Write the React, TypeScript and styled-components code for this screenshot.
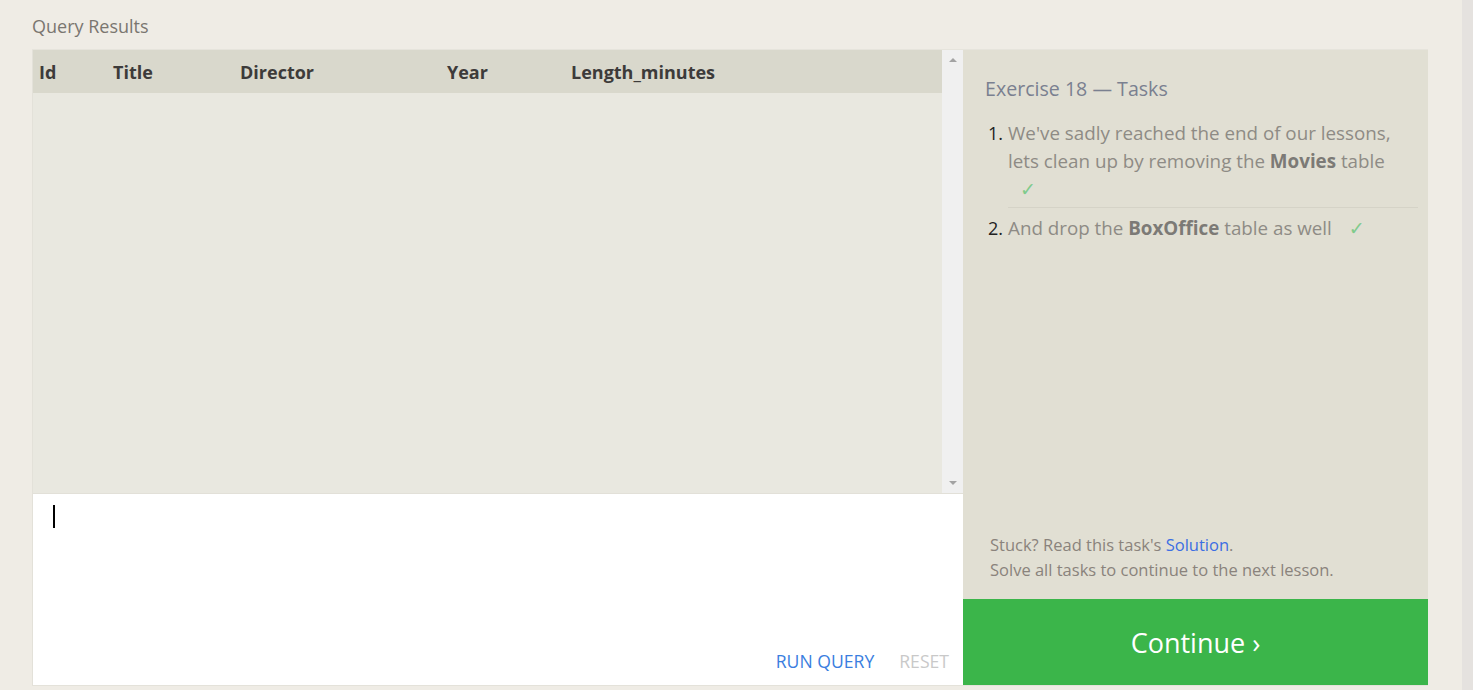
import React from 'react';
import styled, { createGlobalStyle } from 'styled-components';

const GlobalStyle = createGlobalStyle`
  body {
    margin: 0;
    background: #efece5;
    font-family: "Open Sans", "Liberation Sans", sans-serif;
  }
`;

const Page = styled.div`
  display: flex;
  height: 690px;
  overflow: hidden;
`;

const Main = styled.div`
  flex: 1;
  padding: 0 34px 0 32px;
`;

const PageScroll = styled.div`
  width: 11px;
  background: #e5e2df;
`;

const Heading = styled.div`
  height: 49px;
  padding-top: 13px;
  box-sizing: border-box;
  font-size: 18px;
  line-height: 26px;
  color: #7a7670;
`;

const Panel = styled.div`
  display: grid;
  grid-template-columns: 931px 465px;
  height: 637px;
  border-top: 1px solid #e6e4dc;
  border-bottom: 1px solid #e4e2da;
  box-sizing: border-box;
`;

const LeftColumn = styled.div`
  display: flex;
  flex-direction: column;
  border-left: 1px solid #e3e1d9;
`;

const Results = styled.div`
  display: flex;
  height: 443px;
  background: #e9e8e0;
`;

const TableArea = styled.div`
  flex: 1;
`;

const Table = styled.table`
  width: 100%;
  border-collapse: collapse;
  table-layout: fixed;
`;

const HeadCell = styled.th<{ $w?: number }>`
  box-sizing: border-box;
  width: ${(p) => (p.$w ? `${p.$w}px` : 'auto')};
  height: 43px;
  padding: 0 0 0 6px;
  text-align: left;
  font-size: 18px;
  font-weight: 700;
  color: #3d3b3a;
  background: #d9d8cc;
`;

const ScrollTrack = styled.div`
  width: 21px;
  background: #f0f0f0;
  display: flex;
  flex-direction: column;
  justify-content: space-between;
  align-items: center;
  padding: 8px 0;
  box-sizing: border-box;
`;

const Arrow = styled.div<{ $down?: boolean }>`
  width: 0;
  height: 0;
  border-left: 4px solid transparent;
  border-right: 4px solid transparent;
  ${(p) =>
    p.$down
      ? 'border-top: 4px solid #a3a3a3;'
      : 'border-bottom: 4px solid #a3a3a3;'}
`;

const Editor = styled.div`
  flex: 1;
  background: #fff;
  border-top: 1px solid #e2e0d8;
  display: flex;
  flex-direction: column;
  justify-content: space-between;
  padding: 11px 14px 12px 20px;
`;

const Caret = styled.div`
  width: 2px;
  height: 23px;
  background: #000;
`;

const EditorActions = styled.div`
  display: flex;
  justify-content: flex-end;
  gap: 25px;
`;

const ActionButton = styled.span<{ $muted?: boolean }>`
  font-size: 17.6px;
  line-height: 24px;
  color: ${(p) => (p.$muted ? '#c9c9c9' : '#3a7ee0')};
`;

const RightColumn = styled.div`
  display: flex;
  flex-direction: column;
`;

const TasksPanel = styled.div`
  flex: 1;
  background: #e1dfd3;
  padding: 25px 10px 17px 22px;
  display: flex;
  flex-direction: column;
`;

const TasksTitle = styled.div`
  font-size: 19.6px;
  line-height: 28px;
  color: #7a8090;
  margin-bottom: 16px;
`;

const TaskList = styled.ol`
  list-style: none;
  margin: 0;
  padding: 0;
  flex: 1;
`;

const TaskItem = styled.li<{ $spaced?: boolean }>`
  display: flex;
  font-size: 18.8px;
  line-height: 28px;
  padding-top: ${(p) => (p.$spaced ? '6px' : '0')};
`;

const TaskNumber = styled.span`
  width: 20px;
  margin-left: 3px;
  font-size: 18px;
  color: #222;
`;

const TaskText = styled.span<{ $divided?: boolean }>`
  flex: 1;
  padding: ${(p) => (p.$divided ? '0 24px 4px 0' : '0 24px 0 0')};
  border-bottom: ${(p) => (p.$divided ? '1px solid #d5d3c7' : 'none')};
  color: #8e8b85;
  b {
    color: #7c7a76;
  }
`;

const Check = styled.span`
  display: inline-block;
  margin-left: 12px;
  font-family: "DejaVu Sans", sans-serif;
  font-size: 19px;
  color: #7fcb8c;
`;

const Note = styled.div`
  font-size: 16.5px;
  line-height: 25px;
  color: #8a837c;
  padding-left: 5px;
  a {
    color: #3c6ee3;
    text-decoration: none;
  }
`;

const ContinueButton = styled.div`
  height: 86px;
  background: #3bb54a;
  color: #fff;
  font-size: 27px;
  display: flex;
  align-items: center;
  justify-content: center;
`;

const columns = [
  { label: 'Id', w: 74 },
  { label: 'Title', w: 127 },
  { label: 'Director', w: 207 },
  { label: 'Year', w: 124 },
  { label: 'Length_minutes' },
];

const App: React.FC = () => {
  return (
    <>
      <GlobalStyle />
      <Page>
        <Main>
          <Heading>Query Results</Heading>
          <Panel>
            <LeftColumn>
              <Results>
                <TableArea>
                  <Table>
                    <thead>
                      <tr>
                        {columns.map((c) => (
                          <HeadCell key={c.label} $w={c.w}>
                            {c.label}
                          </HeadCell>
                        ))}
                      </tr>
                    </thead>
                  </Table>
                </TableArea>
                <ScrollTrack>
                  <Arrow />
                  <Arrow $down />
                </ScrollTrack>
              </Results>
              <Editor>
                <Caret />
                <EditorActions>
                  <ActionButton>RUN QUERY</ActionButton>
                  <ActionButton $muted>RESET</ActionButton>
                </EditorActions>
              </Editor>
            </LeftColumn>
            <RightColumn>
              <TasksPanel>
                <TasksTitle>Exercise 18 — Tasks</TasksTitle>
                <TaskList>
                  <TaskItem>
                    <TaskNumber>1.</TaskNumber>
                    <TaskText $divided>
                      We've sadly reached the end of our lessons, lets clean up by
                      removing the <b>Movies</b> table <Check>✓</Check>
                    </TaskText>
                  </TaskItem>
                  <TaskItem $spaced>
                    <TaskNumber>2.</TaskNumber>
                    <TaskText>
                      And drop the <b>BoxOffice</b> table as well <Check>✓</Check>
                    </TaskText>
                  </TaskItem>
                </TaskList>
                <Note>
                  Stuck? Read this task's <a href="#">Solution</a>.
                </Note>
                <Note>Solve all tasks to continue to the next lesson.</Note>
              </TasksPanel>
              <ContinueButton>Continue ›</ContinueButton>
            </RightColumn>
          </Panel>
        </Main>
        <PageScroll />
      </Page>
    </>
  );
};

export default App;
